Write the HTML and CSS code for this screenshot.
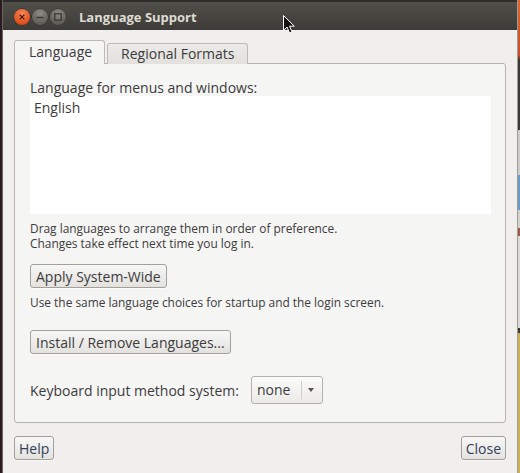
FILE: index.html
```html
<!DOCTYPE html>
<html lang="en">

<head>
  <meta charset="UTF-8" />
  <title>Language Support</title>
  <link rel="stylesheet" href="styles.css">
</head>

<body>
  <div class="screen">
    <div class="edge-left"></div>

    <div class="window">
      <div class="titlebar">
        <div class="controls">
          <span class="wbtn close">
            <svg width="16" height="16" viewBox="0 0 16 16">
              <path d="M5.6 5.6 L10.4 10.4 M10.4 5.6 L5.6 10.4" stroke="#4a1c0c" stroke-width="1.3" />
            </svg>
          </span>
          <span class="wbtn">
            <svg width="16" height="16" viewBox="0 0 16 16">
              <path d="M4.5 8.5 H11.5" stroke="#35332f" stroke-width="1.4" />
            </svg>
          </span>
          <span class="wbtn">
            <svg width="16" height="16" viewBox="0 0 16 16">
              <rect x="4.8" y="4.8" width="6.4" height="6.4" fill="none" stroke="#35332f" stroke-width="1.2" />
            </svg>
          </span>
        </div>
        <div class="title">Language Support</div>
      </div>

      <div class="content">
        <div class="notebook">
          <div class="tabs">
            <div class="tab active">Language</div>
            <div class="tab">Regional Formats</div>
          </div>

          <div class="page">
            <div class="label">Language for menus and windows:</div>
            <div class="lang-list">
              <div class="lang-item">English</div>
            </div>

            <p class="hint">Drag languages to arrange them in order of preference.<br>Changes take effect next time you log in.</p>
            <button class="btn">Apply System-Wide</button>

            <p class="hint">Use the same language choices for startup and the login screen.</p>
            <button class="btn install">Install / Remove Languages...</button>

            <div class="im-row">
              <span>Keyboard input method system:</span>
              <div class="combo">
                <span class="combo-value">none</span>
                <span class="combo-arrow"></span>
              </div>
            </div>
          </div>
        </div>

        <div class="actions">
          <button class="btn dialog-btn">Help</button>
          <button class="btn dialog-btn">Close</button>
        </div>
      </div>
    </div>

    <div class="edge-right"></div>

    <!-- mouse pointer over the title bar -->
    <svg class="pointer" width="13" height="20" viewBox="0 0 13 20">
      <path d="M0.5 0.5 L0.5 15.5 L4 12 L6.6 18 L9 17 L6.5 11.2 L11.3 11.2 Z" fill="#111" stroke="#fff" stroke-width="1" stroke-linejoin="round" />
    </svg>
  </div>
</body>

</html>
```

FILE: styles.css
```css
body {
  margin: 0;
  padding: 0;
  font-family: 'Open Sans', 'Noto Sans', sans-serif;
  color: #3c3c3c;
}

.screen {
  position: relative;
  display: flex;
  width: 520px;
  height: 473px;
  overflow: hidden;
}

.edge-left {
  width: 3px;
  background: linear-gradient(to right, #2b1a20 0, #2b1a20 2px, #6b6660 2px);
}

.edge-right {
  width: 3px;
  background: linear-gradient(#e1632f 0, #c8502a 55px, #3a3935 60px, #3a3935 130px, #cfcdc9 130px, #cfcdc9 175px, #6a9bc8 175px, #6a9bc8 210px, #d5d3cf 210px, #d5d3cf 228px, #9a5d48 228px, #9a5d48 236px, #dcdad6 236px, #dcdad6 328px, #3a3935 328px, #3a3935 333px, #c9b25a 333px);
  border-left: 1px solid #9f9b95;
  box-sizing: border-box;
}

.window {
  flex: 1;
  display: flex;
  flex-direction: column;
  background-color: #f0efed;
}

.titlebar {
  height: 28px;
  display: flex;
  align-items: center;
  padding-left: 11px;
  border-top: 2px solid #2e2d2a;
  background: linear-gradient(#514f4a, #3c3b37);
}

.controls {
  display: flex;
  gap: 2px;
  margin-top: 1px;
}

.wbtn {
  display: block;
  width: 16px;
  height: 16px;
  border-radius: 50%;
  background: radial-gradient(circle at 50% 30%, #8f8c86, #5e5b56 75%);
  box-shadow: 0 0 0 0.5px #2e2d2a;
}

.wbtn svg {
  display: block;
}

.wbtn.close {
  background: radial-gradient(circle at 50% 30%, #f6875a, #df4b18 75%);
}

.title {
  margin-left: 13px;
  margin-top: 1px;
  font-size: 13px;
  font-weight: bold;
  color: #dfdbd2;
}

.content {
  flex: 1;
  padding: 11px 11px 0 11px;
  display: flex;
  flex-direction: column;
}

.tabs {
  display: flex;
  align-items: flex-end;
  gap: 2px;
  height: 23px;
  margin-bottom: -1px;
  position: relative;
  z-index: 1;
}

.tab {
  height: 20px;
  padding: 0 13px;
  font-size: 14px;
  line-height: 20px;
  background: linear-gradient(#ebeae8, #e2e1de);
  border: 1px solid #bdbab4;
  border-bottom: none;
  border-radius: 3px 3px 0 0;
}

.tab.active {
  height: 23px;
  line-height: 22px;
  padding: 0 12px 0 14px;
  background: #f5f5f4;
}

.page {
  height: 343px;
  padding: 15px 14px 0 15px;
  background: #f5f5f4;
  border: 1px solid #b6b3ad;
  border-radius: 0 3px 3px 3px;
}

.label {
  font-size: 14px;
  line-height: 17px;
}

.lang-list {
  height: 118px;
  background: #fff;
}

.lang-item {
  padding: 3px 4px;
  font-size: 14px;
  line-height: 17px;
}

.hint {
  margin: 7px 0 0 0;
  font-size: 11.9px;
  line-height: 15px;
}

.btn {
  display: block;
  height: 24px;
  padding: 0 5px;
  font-family: inherit;
  font-size: 14px;
  color: #3c3c3c;
  border: 1px solid #a3a09a;
  border-radius: 3px;
  background: linear-gradient(#f7f7f6, #e3e2df);
  box-shadow: 0 1px 0 rgba(255, 255, 255, 0.6);
}

.page .btn {
  margin-top: 13px;
}

.page .btn.install {
  margin-top: 20px;
}

.im-row {
  display: flex;
  align-items: center;
  gap: 12px;
  margin-top: 22px;
  font-size: 14px;
}

.combo {
  display: flex;
  align-items: center;
  width: 72px;
  height: 28px;
  box-sizing: border-box;
  border: 1px solid #b5b2ac;
  border-radius: 3px;
  background: linear-gradient(#fbfbfa, #ebeae7);
}

.combo-value {
  width: 44px;
  padding-left: 5px;
  border-right: 1px solid #cfcdc8;
  line-height: 18px;
}

.combo-arrow {
  margin-left: 6px;
  width: 0;
  height: 0;
  border-left: 3px solid transparent;
  border-right: 3px solid transparent;
  border-top: 4px solid #555;
}

.actions {
  display: flex;
  justify-content: space-between;
  margin-top: 13px;
}

.dialog-btn {
  color: #34405a;
  padding: 0 4px;
}

.pointer {
  position: absolute;
  left: 283px;
  top: 15px;
}
```
